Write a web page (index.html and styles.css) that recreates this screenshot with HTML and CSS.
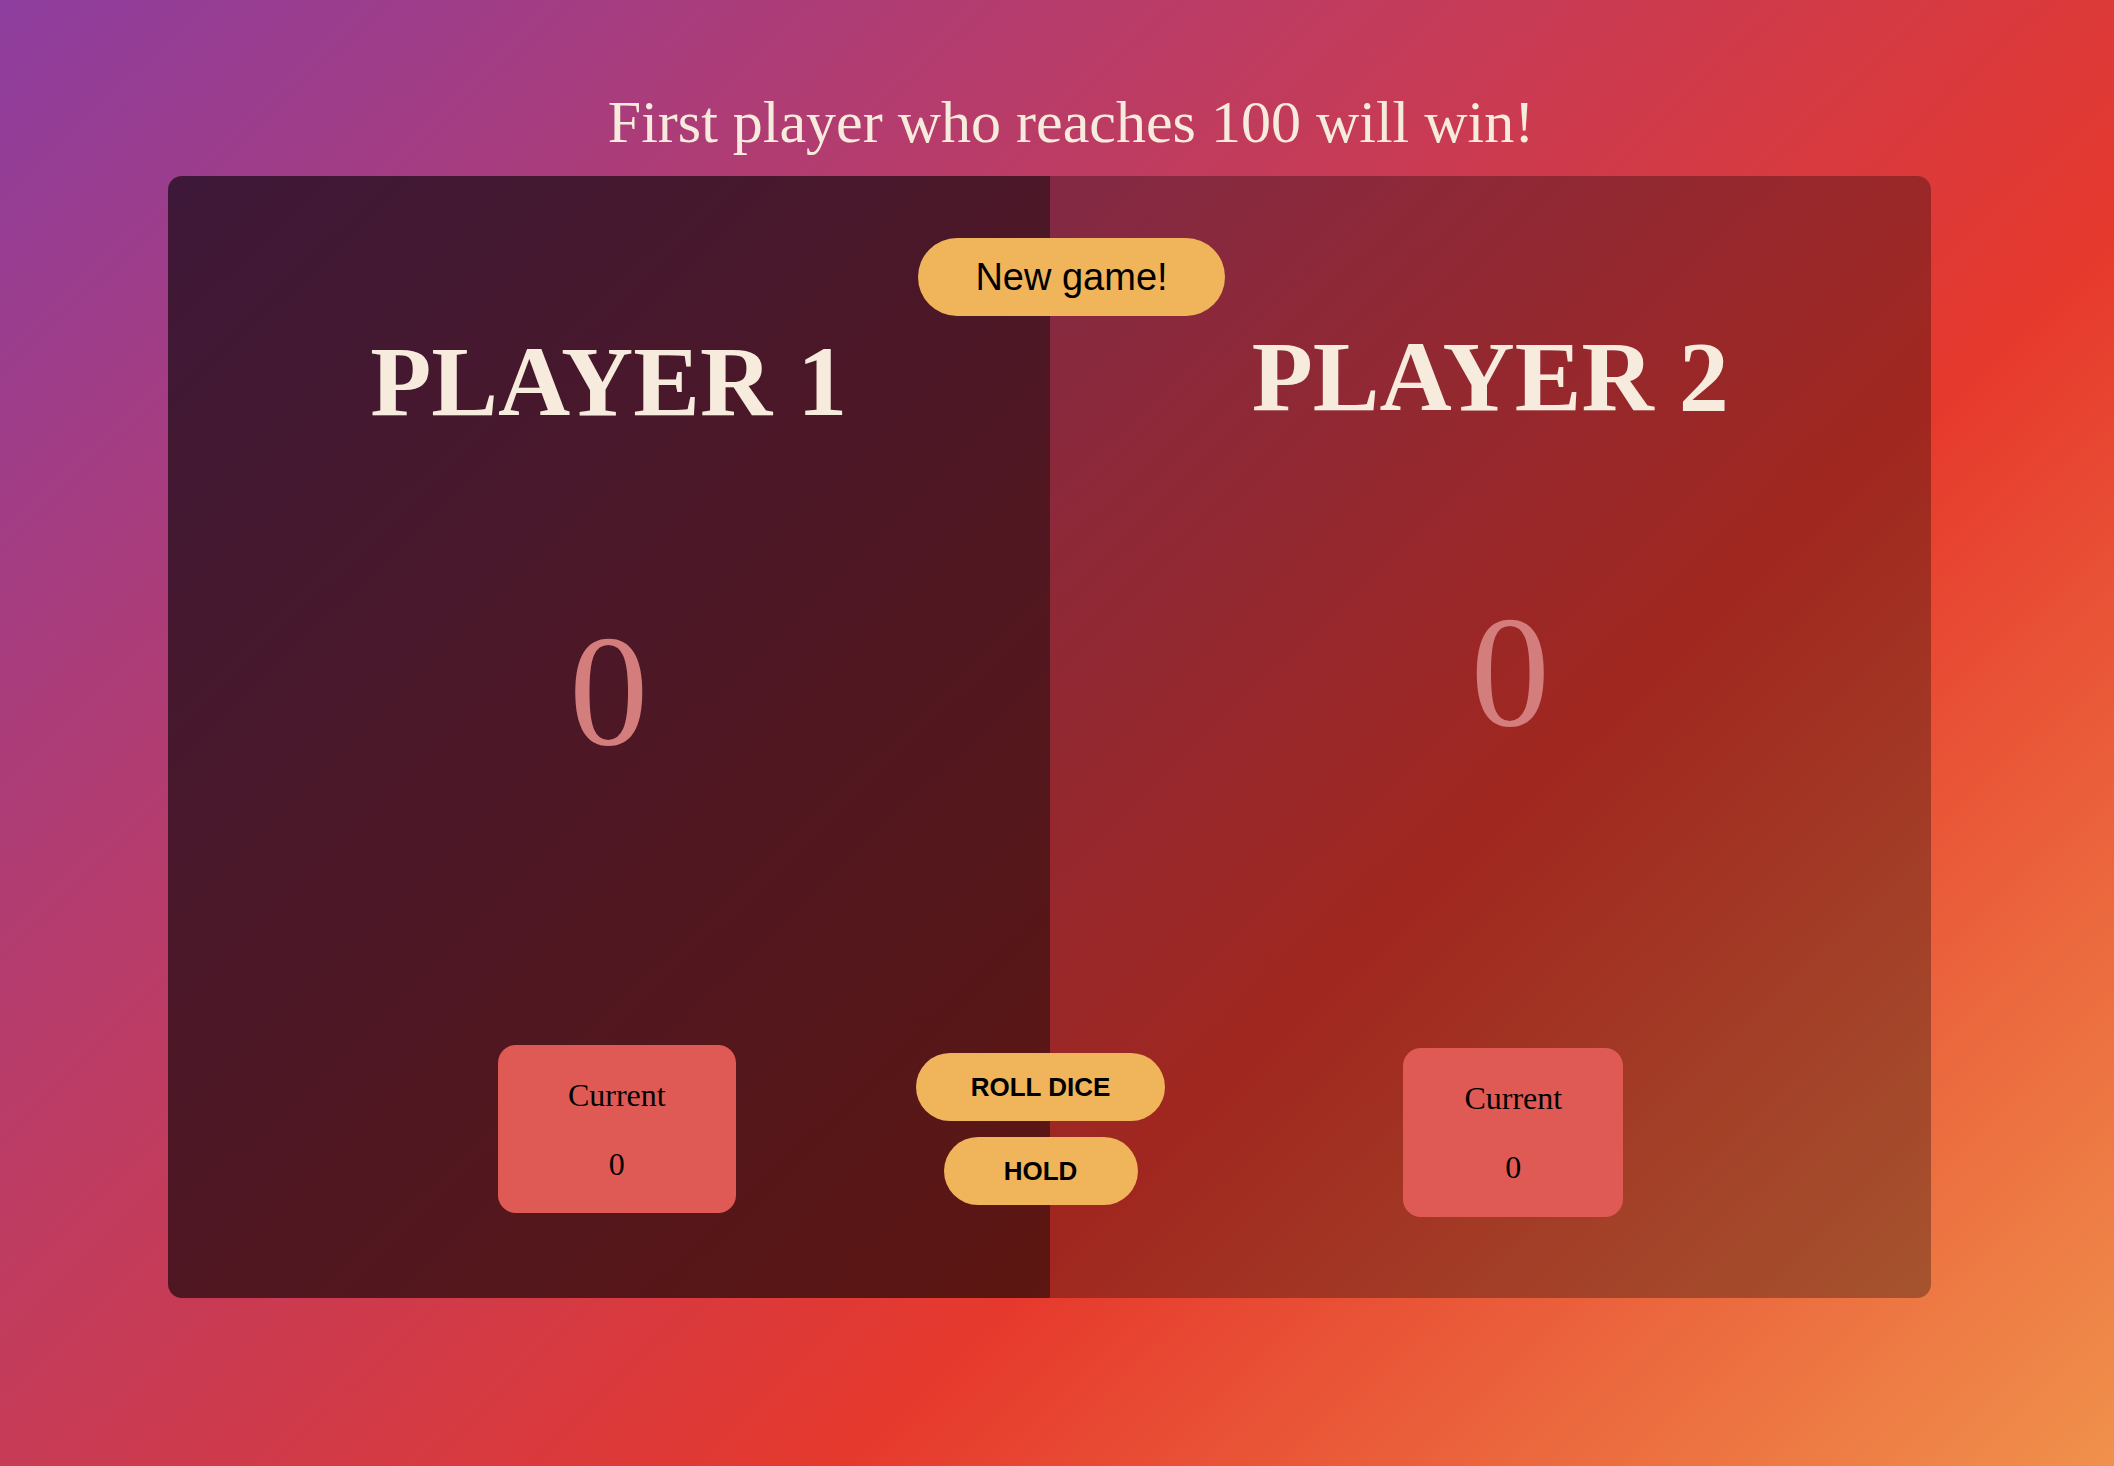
FILE: index.html
```html
<!DOCTYPE html>
<html lang="en">
<head>
  <meta charset="utf-8">
  <title>Pig Game</title>
  <link rel="stylesheet" href="styles.css">
</head>
<body>
  <h1 class="title">First player who reaches 100 will win!</h1>
  <main class="board">
    <section class="player player--one">
      <h2 class="player__name">PLAYER 1</h2>
      <p class="player__score">0</p>
      <div class="current current--one">
        <p class="current__label">Current</p>
        <p class="current__score">0</p>
      </div>
    </section>
    <section class="player player--two">
      <h2 class="player__name">PLAYER 2</h2>
      <p class="player__score">0</p>
      <div class="current current--two">
        <p class="current__label">Current</p>
        <p class="current__score">0</p>
      </div>
    </section>
    <button class="btn btn--new">New game!</button>
    <div class="actions">
      <button class="btn btn--roll">ROLL DICE</button>
      <button class="btn btn--hold">HOLD</button>
    </div>
  </main>
</body>
</html>
```

FILE: styles.css
```css
html, body {
  height: 100%;
}

body {
  margin: 0;
  font-family: "Liberation Serif", "Times New Roman", serif;
  background: linear-gradient(136deg, #8e3e9f 0%, #e6392d 65%, #f0914c 100%);
}

.title {
  margin: 0;
  padding: 92px 0 0 28px;
  text-align: center;
  font-size: 60px;
  line-height: 1;
  font-weight: normal;
  color: #f6ebdc;
}

.board {
  position: relative;
  display: flex;
  margin: 24px 0 0 168px;
  width: 1763px;
  height: 1122px;
  border-radius: 14px;
  overflow: hidden;
}

.player {
  flex: 1;
  display: flex;
  flex-direction: column;
  align-items: center;
}

.player--one {
  background: rgba(0, 0, 0, 0.6);
  padding-top: 156px;
}

.player--two {
  background: rgba(0, 0, 0, 0.3);
  padding-top: 151px;
}

.player__name {
  margin: 0;
  font-size: 100px;
  line-height: 1;
  font-weight: bold;
  color: #f6ebdc;
}

.player__score {
  margin: 0;
  font-size: 158px;
  line-height: 1;
  color: #d47d7d;
}

.player--one .player__score {
  margin-top: 180px;
}

.player--two .player__score {
  margin-top: 166px;
  margin-left: 40px;
}

.current {
  box-sizing: border-box;
  height: 168px;
  padding-top: 34px;
  border-radius: 18px;
  background: #e05a55;
  display: flex;
  flex-direction: column;
  align-items: center;
  gap: 37px;
}

.current--one {
  width: 238px;
  margin-top: 275px;
  margin-left: 16px;
}

.current--two {
  width: 220px;
  height: 169px;
  margin-top: 297px;
  margin-left: 46px;
}

.current__label,
.current__score {
  margin: 0;
  font-size: 32px;
  line-height: 1;
  color: #000;
}

.btn {
  font-family: "Liberation Sans", Arial, sans-serif;
  border: none;
  padding: 0;
  background: #f0b45b;
  color: #000;
  border-radius: 999px;
  cursor: pointer;
}

.btn--new {
  position: absolute;
  left: 750px;
  top: 62px;
  width: 307px;
  height: 78px;
  font-size: 38px;
}

.actions {
  position: absolute;
  left: 748px;
  top: 877px;
  width: 249px;
  display: flex;
  flex-direction: column;
  align-items: center;
  gap: 16px;
}

.btn--roll,
.btn--hold {
  height: 68px;
  font-size: 26px;
  font-weight: bold;
}

.btn--roll {
  width: 249px;
}

.btn--hold {
  width: 194px;
}
```
